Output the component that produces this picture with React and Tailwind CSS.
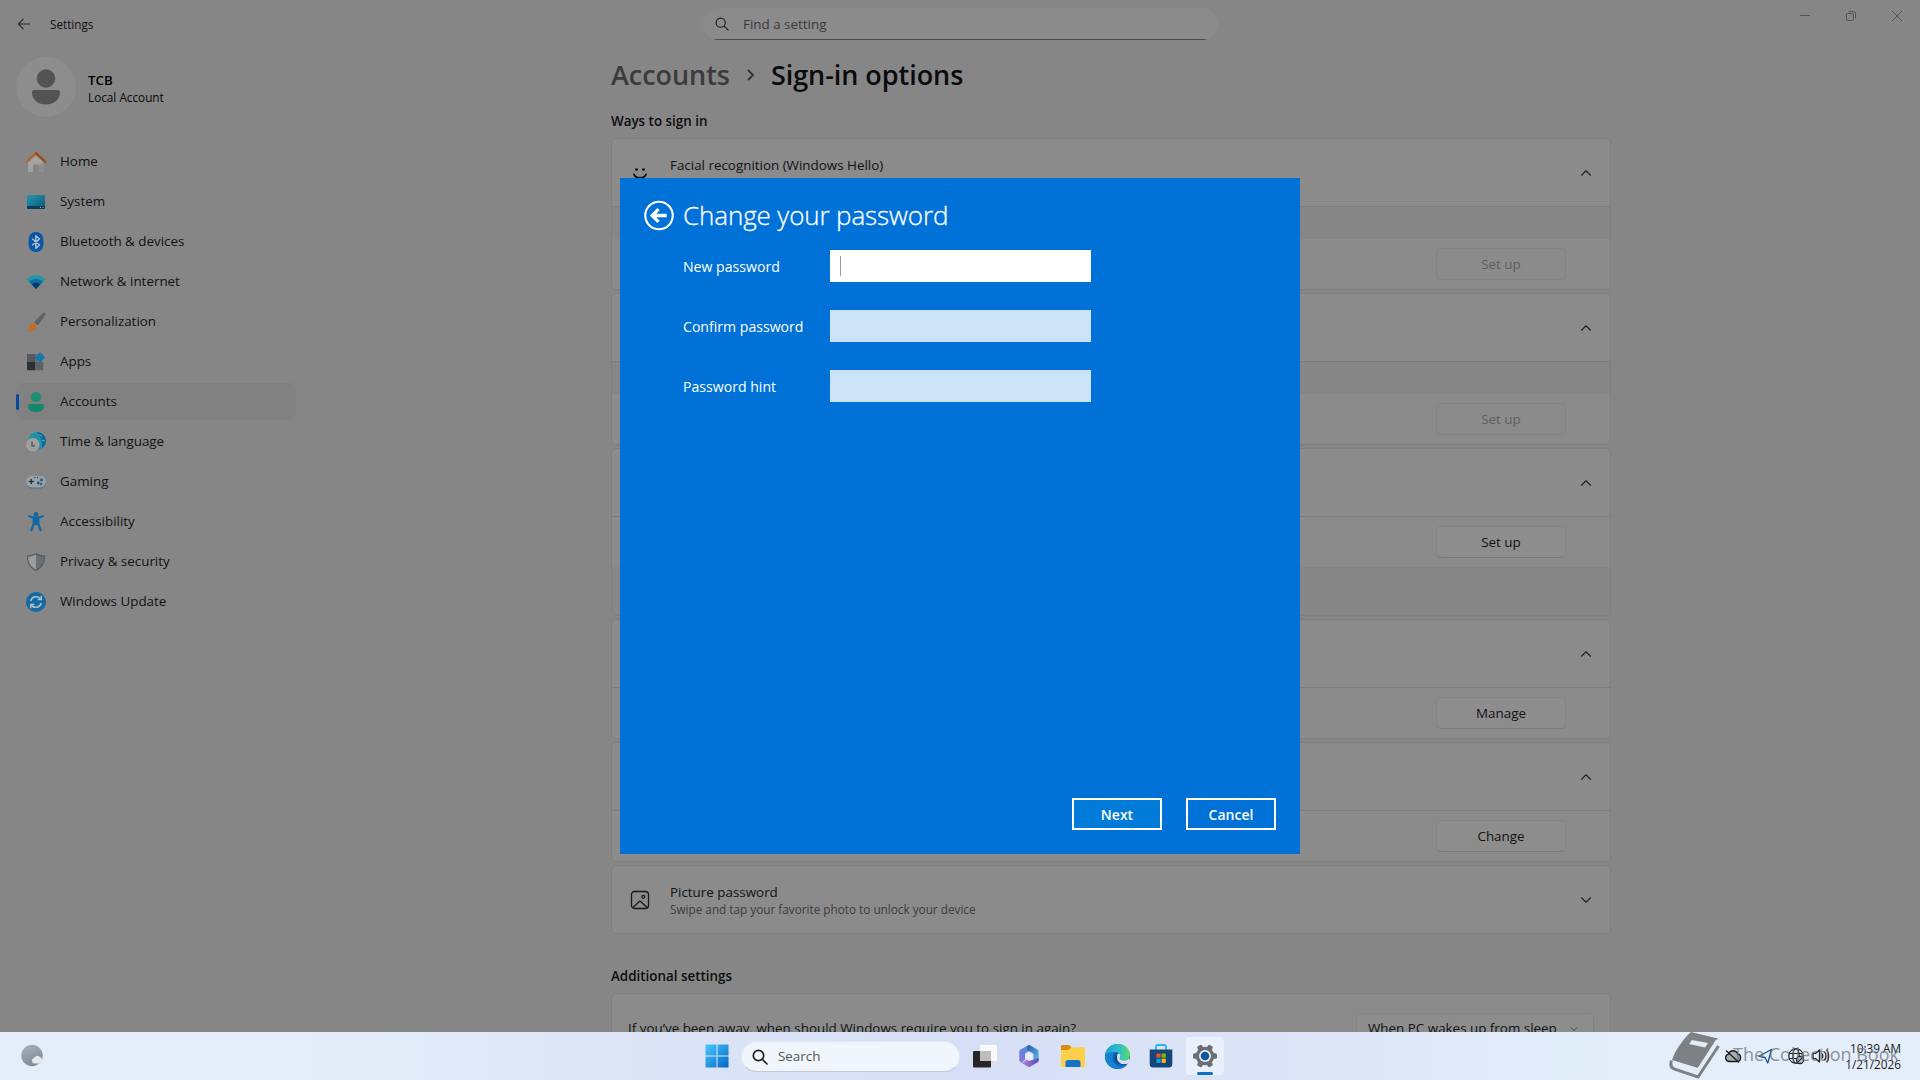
import React, { useState } from 'react';
import { ChevronUp, ChevronDown } from 'lucide-react';

/* ---------- sidebar icons (20x20) ---------- */

const HomeIcon = () => (
  <svg width="22" height="22" viewBox="0 0 22 22">
    <path d="M3 9.500 11 2.500l8 7V20a1 1 0 0 1-1 1h-4v-6.500a1 1 0 0 0-1-1H9a1 1 0 0 0-1 1V21H4a1 1 0 0 1-1-1z" fill="#a3a3a3" />
    <path d="M14 14v7h4a1 1 0 0 0 1-1v-9z" fill="#8f8f8f" />
    <path d="M2 10.600 11 2.400l9 8.200" fill="none" stroke="#b3652a" strokeWidth="2.500" strokeLinecap="round" strokeLinejoin="round" />
    <path d="m11 2.400 9 8.200" fill="none" stroke="#9c4d1c" strokeWidth="2.500" strokeLinecap="round" />
  </svg>
);

const SystemIcon = () => (
  <svg width="20" height="20" viewBox="0 0 20 20">
    <defs>
      <linearGradient id="sys" x1="0" y1="0" x2="1" y2="1">
        <stop offset="0" stopColor="#2299a6" />
        <stop offset="1" stopColor="#0d5680" />
      </linearGradient>
    </defs>
    <rect x="1" y="3" width="18" height="14" rx="1.200" fill="url(#sys)" />
    <path d="M1 14h18v1.800A1.200 1.200 0 0 1 17.800 17H2.200A1.200 1.200 0 0 1 1 15.800z" fill="#093b5a" />
    <path d="M14 15.500h1M16.500 15.500h1" stroke="#8fb0bd" strokeWidth="1" />
  </svg>
);

const BluetoothIcon = () => (
  <svg width="20" height="20" viewBox="0 0 20 20">
    <rect x="2.600" y="0" width="14.800" height="20" rx="7.200" fill="#0756a8" />
    <path d="m6.300 6.700 7.200 6.300-3.600 3.200V3.800l3.600 3.200-7.200 6.300" fill="none" stroke="#b9c4cf" strokeWidth="1.400" strokeLinejoin="round" />
  </svg>
);

const NetworkIcon = () => (
  <svg width="20" height="20" viewBox="0 0 20 20">
    <path d="M.5 7.500C3 4.600 6.300 3.300 10 3.300s7 1.300 9.500 4.200L10 17z" fill="#2299a5" />
    <path d="M3 9.800C5 7.800 7.300 6.900 10 6.900s5 .9 7 2.900L10 17z" fill="#126ba4" />
    <path d="M5.700 12.500c1.300-1.200 2.700-1.700 4.300-1.700s3 .5 4.300 1.700L10 17z" fill="#0b3a72" />
  </svg>
);

const BrushIcon = () => (
  <svg width="20" height="20" viewBox="0 0 20 20">
    <path d="M18.600.8c1 .6 1.200 1.600.5 2.700L11.500 14 7.500 10.700 16.600 1.300c.6-.7 1.300-.9 2-.5z" fill="#5f6468" />
    <path d="M7.800 10.300 11.800 13.700 10.700 15 6.800 11.500z" fill="#96999b" />
    <path d="M6.800 11.200c2 .3 3.700 1.800 4 3.700C9.500 18.500 5 20.200.7 19c2.300-1.300 2-2.800 2.900-5.200.6-1.600 1.700-2.600 3.200-2.600z" fill="#bf6d28" />
  </svg>
);

const AppsIcon = () => (
  <svg width="20" height="20" viewBox="0 0 20 20">
    <rect x="1" y="2" width="8" height="8" fill="#55585c" />
    <rect x="1" y="10" width="8" height="8.200" fill="#2c2f33" />
    <rect x="9" y="10" width="8.300" height="8.200" fill="#5e6165" />
    <rect x="9" y="2" width="3" height="8" fill="#6c6f72" />
    <rect x="10.200" y="1.700" width="7.600" height="7.600" rx="1.200" transform="rotate(45 14 5.500)" fill="#1677a9" />
  </svg>
);

const AccountsIcon = () => (
  <svg width="20" height="20" viewBox="0 0 20 20">
    <circle cx="10" cy="5.200" r="5.100" fill="#198f76" />
    <path d="M4 12h12a2 2 0 0 1 2 2c0 4-4 6.200-8 6.200S2 18 2 14a2 2 0 0 1 2-2z" fill="#148670" />
  </svg>
);

const TimeIcon = () => (
  <svg width="20" height="20" viewBox="0 0 20 20">
    <circle cx="11" cy="9" r="9" fill="#1f93a6" />
    <path d="M11 0a9 9 0 0 1 8 13l-3 3V9l-2-4z" fill="#14669c" />
    <path d="M13 2.500l3 2M16 8l3 1" stroke="#51aab4" strokeWidth="1" />
    <circle cx="6.800" cy="12.800" r="6.800" fill="#a0a0a0" />
    <path d="M6 9.500v4.300h3" fill="none" stroke="#42474b" strokeWidth="1.200" />
  </svg>
);

const GamingIcon = () => (
  <svg width="20" height="20" viewBox="0 0 20 20">
    <rect x="0" y="3.500" width="20" height="13" rx="6.300" fill="#5f686f" />
    <rect x="0" y="3.500" width="20" height="12" rx="6" fill="#98a2aa" />
    <path d="M5.300 7v5M2.800 9.500h5" stroke="#2b3035" strokeWidth="1.400" />
    <circle cx="12.300" cy="11" r="1.400" fill="#2a5070" />
    <circle cx="15.500" cy="8" r="1.400" fill="#2a5070" />
    <circle cx="15" cy="12" r="1.300" fill="#3c5f7b" />
    <path d="M8.500 5.500h1M11 5.500h1" stroke="#333" strokeWidth="1" />
  </svg>
);

const AccessibilityIcon = () => (
  <svg width="20" height="20" viewBox="0 0 20 20">
    <circle cx="10" cy="2.300" r="2.300" fill="#1066a6" />
    <path d="M3.200 4.200 8.500 6h3l5.300-1.800" fill="none" stroke="#1066a6" strokeWidth="2.200" strokeLinecap="round" strokeLinejoin="round" />
    <path d="M7.700 5.500h4.600v6l2.300 6.800M7.700 5.500v6l-2.300 6.800" fill="none" stroke="#1066a6" strokeWidth="2.200" strokeLinecap="round" />
    <path d="M7.500 5.500h5V12l-2.500 1.500L7.500 12z" fill="#1066a6" />
  </svg>
);

const ShieldIcon = () => (
  <svg width="20" height="20" viewBox="0 0 20 20">
    <path d="M10 1c2.600 1.600 5.500 2.300 9 2.500 0 7.500-2 12-9 15.500C3 15.500 1 11 1 3.500 4.500 3.300 7.400 2.600 10 1z" fill="#54585c" />
    <path d="M10 2.400c-2.200 1.200-4.900 1.900-7.900 2.200C2.300 10.800 4.300 14.800 10 17.700z" fill="#9b9ea0" />
    <path d="M10 2.400c2.200 1.200 4.900 1.900 7.900 2.200-.2 6.200-2.200 10.200-7.900 13.100z" fill="#6b7074" />
  </svg>
);

const UpdateIcon = () => (
  <svg width="20" height="20" viewBox="0 0 20 20">
    <circle cx="10" cy="10" r="10" fill="#1169a5" />
    <path d="M4.700 9a5.600 5.600 0 0 1 10-2M15.300 11a5.600 5.600 0 0 1-10 2" fill="none" stroke="#b3bec6" strokeWidth="1.500" />
    <path d="M15.300 3.800v3.700h-3.700M4.700 16.200v-3.700h3.700" fill="none" stroke="#b3bec6" strokeWidth="1.500" />
  </svg>
);

/* ---------- taskbar icons ---------- */

const StartIcon = () => (
  <svg width="24" height="24" viewBox="0 0 24 24">
    <defs>
      <linearGradient id="win" x1="0" y1="0" x2="1" y2="1">
        <stop offset="0" stopColor="#4cc8fb" />
        <stop offset="1" stopColor="#0067c8" />
      </linearGradient>
    </defs>
    <path d="M.5 .5h11v11H.5zM12.500 .5h11v11h-11zM.5 12.500h11v11H.5zM12.500 12.500h11v11h-11z" fill="url(#win)" />
  </svg>
);

const TaskViewIcon = () => (
  <svg width="24" height="24" viewBox="0 0 24 24">
    <rect x="7" y="1" width="17" height="16" rx="1" fill="#fafafa" />
    <rect x="0" y="7" width="18" height="16.500" rx="1" fill="#262626" />
    <path d="M7 7h11v10H7z" fill="#bcbcbc" />
  </svg>
);

const CopilotIcon = () => (
  <svg width="22" height="24" viewBox="0 0 22 24">
    <defs>
      <linearGradient id="cop1" x1="0" y1="0" x2="0" y2="1">
        <stop offset="0" stopColor="#4f8fdc" />
        <stop offset="1" stopColor="#8a70d8" />
      </linearGradient>
      <linearGradient id="cop2" x1="0" y1="0" x2="1" y2="1">
        <stop offset="0" stopColor="#2c57a8" />
        <stop offset="1" stopColor="#56c3ea" />
      </linearGradient>
      <linearGradient id="cop3" x1="0" y1="0" x2="1" y2="0">
        <stop offset="0" stopColor="#b78be6" />
        <stop offset="1" stopColor="#5a4bb0" />
      </linearGradient>
    </defs>
    <path d="M9.500 1.500 2.300 5.800A2 2 0 0 0 1.300 7.500V16a2 2 0 0 0 3 1.700L7 16V9.500l5.500-3.300z" fill="url(#cop1)" />
    <path d="M9.500 1.500a3 3 0 0 1 3 0l7.200 4.200a2 2 0 0 1 1 1.800V16l-5.200 1.500V9.700L9 6z" fill="url(#cop2)" />
    <path d="M20.700 14v2.500a2 2 0 0 1-1 1.700l-7.200 4.300a3 3 0 0 1-3 0L2.300 18c3 .5 5-1.300 6.500-2.300l2.200 1.300z" fill="url(#cop3)" />
    <path d="m11 8.300 3.500 2v3.800L11 16.100l-3.500-2v-3.800z" fill="#e8edfb" />
  </svg>
);

const FolderIcon = () => (
  <svg width="24" height="24" viewBox="0 0 24 24">
    <path d="M0 2.200C0 1.500.5 1 1.200 1h7l2.300 2.300L8 8H0z" fill="#d98f0c" />
    <path d="M0 6h7.500l3-2.800H23a1 1 0 0 1 1 1V22a1 1 0 0 1-1 1H1a1 1 0 0 1-1-1z" fill="#fcd04a" />
    <path d="M4.500 23v-4.500A2.500 2.500 0 0 1 7 16h10a2.500 2.500 0 0 1 2.500 2.500V23z" fill="#1373c4" />
  </svg>
);

const EdgeIcon = () => (
  <svg width="25" height="25" viewBox="0 0 24 24">
    <defs>
      <linearGradient id="edge1" x1="0" y1="0.300" x2="1" y2="0.300">
        <stop offset="0" stopColor="#1d9fe0" />
        <stop offset="0.600" stopColor="#2fc3c0" />
        <stop offset="1" stopColor="#62dc5b" />
      </linearGradient>
    </defs>
    <circle cx="12" cy="12" r="12" fill="#1063b5" />
    <path d="M.1 11C.6 4.800 5.700 0 12 0c6.600 0 12 4.600 12 10.200 0 3.600-2.700 5.600-5.700 5.600-2.400 0-4.300-.8-4.300-1.800 0-.6.8-1 .8-2.300 0-2-2-4-5.200-4C5.500 7.700 1.500 9.500.1 11z" fill="url(#edge1)" />
    <path d="M9.600 7.700C6 10 6 19.500 14.500 21.500c3 .6 6-1 7.800-3.300A12 12 0 0 1 12 24C5.300 24 .2 18.700 0 12c1-2.700 5-4.500 9.600-4.300z" fill="#1581d2" />
    <path d="M9.800 11c-2 5 2.500 9.500 8.500 8.500 2-.3 3.300-1 4-1.500.5-.5 0-1-.6-.7-4 2-9.400.500-10-4-.1-1.200.3-2.200.8-2.700-1-.8-2.300-.5-2.700.4z" fill="#0c4a8d" />
    <path d="M12.400 9.200c1.500-.3 2.500 1 2.400 2.500-.1 1.300-.8 1.700-.8 2.300 0 1 1.900 1.800 4.300 1.800 1.800 0 3.500-.7 4.600-2l1.100 1.300c-.3 1.300-.8 2.400-1.500 3.300-4 2-10 .8-10.900-4.600-.2-2 .1-3.600.8-4.600z" fill="#d7e2f7" />
  </svg>
);

const StoreIcon = () => (
  <svg width="24" height="24" viewBox="0 0 24 24">
    <path d="M7 6V2.500A1.500 1.500 0 0 1 8.500 1h7A1.500 1.500 0 0 1 17 2.500V6" fill="none" stroke="#2cb4ee" strokeWidth="1.800" />
    <path d="M.7 5.500h22.600V20a3.500 3.500 0 0 1-3.500 3.500H4.200A3.500 3.500 0 0 1 .7 20z" fill="#16457c" />
    <rect x="7.400" y="9.500" width="4.200" height="4.200" fill="#f25022" />
    <rect x="12.600" y="9.500" width="4.200" height="4.200" fill="#7fba00" />
    <rect x="7.400" y="14.700" width="4.200" height="4.200" fill="#00a4ef" />
    <rect x="12.600" y="14.700" width="4.200" height="4.200" fill="#ffb900" />
  </svg>
);

const GearIcon = () => (
  <svg width="26" height="26" viewBox="0 0 26 26">
    <g fill="#6a6f75">
      <circle cx="13" cy="13" r="9.300" />
      <rect x="10.300" y="1" width="5.400" height="24" rx="1.500" transform="rotate(30 13 13)" />
      <rect x="10.300" y="1" width="5.400" height="24" rx="1.500" transform="rotate(90 13 13)" />
      <rect x="10.300" y="1" width="5.400" height="24" rx="1.500" transform="rotate(150 13 13)" />
    </g>
    <circle cx="13" cy="13" r="6" fill="#e9effa" />
    <circle cx="13" cy="13" r="4.300" fill="#0f56a0" />
  </svg>
);

const WeatherIcon = () => (
  <svg width="24" height="24" viewBox="0 0 24 24">
    <defs>
      <linearGradient id="moon" x1="0.200" y1="0" x2="0.600" y2="1">
        <stop offset="0" stopColor="#a6b0ba" />
        <stop offset="1" stopColor="#7f8993" />
      </linearGradient>
    </defs>
    <circle cx="11" cy="11.500" r="10.700" fill="url(#moon)" />
    <path d="M13 19.500a3 3 0 0 1 .3-5.800 4 4 0 0 1 7.200 1 2.500 2.500 0 0 1 .3 4.800z" fill="#e4e8ea" />
  </svg>
);

const SearchIcon = ({ size, color, width }) => (
  <svg width={size} height={size} viewBox="0 0 16 16" fill="none" stroke={color} strokeWidth={width} strokeLinecap="round">
    <circle cx="6.500" cy="6.500" r="5.200" />
    <path d="m10.500 10.500 4.500 4.500" />
  </svg>
);

const navItems = [
  { label: 'Home', icon: HomeIcon },
  { label: 'System', icon: SystemIcon },
  { label: 'Bluetooth & devices', icon: BluetoothIcon },
  { label: 'Network & internet', icon: NetworkIcon },
  { label: 'Personalization', icon: BrushIcon },
  { label: 'Apps', icon: AppsIcon },
  { label: 'Accounts', icon: AccountsIcon },
  { label: 'Time & language', icon: TimeIcon },
  { label: 'Gaming', icon: GamingIcon },
  { label: 'Accessibility', icon: AccessibilityIcon },
  { label: 'Privacy & security', icon: ShieldIcon },
  { label: 'Windows Update', icon: UpdateIcon },
];

const taskbarApps = [TaskViewIcon, CopilotIcon, FolderIcon, EdgeIcon, StoreIcon];

function TitleBar() {
  return (
    <header className="flex h-[49px] items-start">
      <div className="flex w-[703px] items-center pl-[17px] pt-[15px]">
        <svg width="14" height="18" viewBox="0 0 14 18" fill="none" stroke="#2b2b2b" strokeWidth="1.100">
          <path d="M13 9H1.500M6.500 3.800 1.300 9l5.200 5.200" />
        </svg>
        <span className="ml-[19px] text-[11.700px] leading-4 text-[#111]">Settings</span>
      </div>
      <div className="mt-2 h-8 w-[515px] overflow-hidden rounded-full bg-[#8b8b8b]">
        <div className="flex h-8 items-center border-b border-[#4a4a4a] pl-3">
          <SearchIcon size={14} color="#1d1d1d" width={1.3} />
          <span className="ml-[14px] pt-px text-[13.400px] text-[#3a3a3a]">Find a setting</span>
        </div>
      </div>
      <div className="ml-auto flex gap-9 pr-[18px] pt-[11px] text-[#555]">
        <svg width="10" height="10" viewBox="0 0 10 10" stroke="currentColor"><path d="M0 4.500h10" /></svg>
        <svg width="10" height="10" viewBox="0 0 10 10" fill="none" stroke="currentColor">
          <rect x=".5" y="2.500" width="7" height="7" rx="1.200" />
          <path d="M2.500 .6h4.800a2.200 2.200 0 0 1 2.200 2.200v4.700" />
        </svg>
        <svg width="10" height="10" viewBox="0 0 10 10" stroke="currentColor"><path d="m0 0 10 10M10 0 0 10" /></svg>
      </div>
    </header>
  );
}

function Sidebar() {
  const [active, setActive] = useState('Accounts');

  return (
    <aside className="w-[611px] shrink-0 pl-4">
      <div className="flex h-[76px] items-center">
        <div className="flex h-[60px] w-[60px] items-center justify-center rounded-full bg-[#8d8d8d]">
          <svg width="30" height="36" viewBox="0 0 30 36" fill="#535353">
            <circle cx="15" cy="9.500" r="9.200" />
            <path d="M3.500 21h23A2.500 2.500 0 0 1 29 23.500C29 31 22.500 35.500 15 35.500S1 31 1 23.500A2.500 2.500 0 0 1 3.500 21z" />
          </svg>
        </div>
        <div className="ml-3 pt-px">
          <div className="text-[13.300px] font-semibold leading-[18px] text-black">TCB</div>
          <div className="text-[11.750px] leading-4 text-[#080808]">Local Account</div>
        </div>
      </div>

      <nav className="mt-[18px] flex w-[280px] flex-col gap-[3px]">
        {navItems.map(({ label, icon: Icon }) => (
          <button
            key={label}
            onClick={() => setActive(label)}
            className={`flex h-[37px] items-center rounded-md text-left ${active === label ? 'bg-[#818181]' : ''}`}
          >
            <span className={`h-4 w-[3px] rounded-full ${active === label ? 'bg-[#08499b]' : ''}`} />
            <span className="ml-[6px] flex w-[22px] justify-center"><Icon /></span>
            <span className="ml-[13px] text-[13.400px] text-[#121212]">{label}</span>
          </button>
        ))}
      </nav>
    </aside>
  );
}

function Card({ children }) {
  return <section className="overflow-hidden rounded-[5px] border border-[#7f7f7f] bg-[#8b8b8b]">{children}</section>;
}

function CardHeader({ icon, title, subtitle, open }) {
  const Chevron = open ? ChevronUp : ChevronDown;
  return (
    <div className="flex h-[67px] items-center pl-[18px] pr-[15px]">
      <div className="flex w-[20px] justify-center">{icon}</div>
      <div className="ml-5 flex-1">
        <div className="text-[13.400px] leading-[18px] text-[#121212]">{title}</div>
        <div className="h-4 text-[11.750px] leading-4 text-[#3d3d3d]">{subtitle}</div>
      </div>
      <Chevron size={18} strokeWidth={1.5} color="#222" />
    </div>
  );
}

function ActionRow({ label, disabled }) {
  return (
    <div className="flex h-[50px] items-center justify-end pr-11">
      <button
        disabled={disabled}
        className={`h-8 w-[130px] rounded-[5px] border text-[13.400px] ${disabled ? 'border-[#838383] text-[#5e5e5e]' : 'border-[#848484] border-b-[#7b7b7b] bg-[#8d8d8d] text-[#121212]'}`}
      >
        {label}
      </button>
    </div>
  );
}

function SignInOptions() {
  return (
    <main className="w-[1000px]">
      <h1 className="flex h-[52px] items-center text-[27px] font-semibold tracking-[-0.050px]">
        <span className="text-[#3b3b3b]">Accounts</span>
        <svg className="mx-4" width="9" height="12" viewBox="0 0 9 12" fill="none" stroke="#333" strokeWidth="1.800">
          <path d="m2 1 5 5-5 5" />
        </svg>
        <span className="text-[#0b0b0b]">Sign-in options</span>
      </h1>
      <h2 className="mt-[11px] h-[26px] text-[13.400px] font-semibold leading-[18px] text-[#0d0d0d]">Ways to sign in</h2>

      <div className="flex flex-col gap-[3px]">
        <Card>
          <CardHeader
            open
            icon={
              <svg width="20" height="20" viewBox="0 0 20 20">
                <circle cx="6.500" cy="6.600" r="1.400" fill="#0c0c0c" />
                <circle cx="13.500" cy="6.600" r="1.400" fill="#0c0c0c" />
                <path d="M4 11.500c1.800 4.500 10.200 4.500 12 0" fill="none" stroke="#0c0c0c" strokeWidth="1.900" strokeLinecap="round" />
              </svg>
            }
            title="Facial recognition (Windows Hello)"
          />
          <div className="h-[33px] border-t border-[#7d7d7d] bg-[#868686]" />
          <ActionRow label="Set up" disabled />
        </Card>
        <Card>
          <CardHeader open />
          <div className="h-[33px] border-t border-[#7d7d7d] bg-[#868686]" />
          <ActionRow label="Set up" disabled />
        </Card>
        <Card>
          <CardHeader open />
          <div className="border-t border-[#7d7d7d]"><ActionRow label="Set up" /></div>
          <div className="h-12 bg-[#868686]" />
        </Card>
        <Card>
          <CardHeader open />
          <div className="border-t border-[#7d7d7d]"><ActionRow label="Manage" /></div>
        </Card>
        <Card>
          <CardHeader open />
          <div className="border-t border-[#7d7d7d]"><ActionRow label="Change" /></div>
        </Card>
        <Card>
          <CardHeader
            icon={
              <svg width="20" height="20" viewBox="0 0 20 20" fill="none" stroke="#181818" strokeWidth="1.300">
                <rect x="1.500" y="1.500" width="17" height="17" rx="3" />
                <circle cx="13.300" cy="6.800" r="1.500" />
                <path d="m3 17.500 6-5.800a1.500 1.500 0 0 1 2 0l6 5.800" />
              </svg>
            }
            title="Picture password"
            subtitle="Swipe and tap your favorite photo to unlock your device"
          />
        </Card>
      </div>

      <h2 className="mt-[33px] h-[26px] text-[13.400px] font-semibold leading-[18px] text-[#0d0d0d]">Additional settings</h2>
      <Card>
        <div className="flex h-[69px] items-center justify-between pl-4 pr-4 text-[13.400px] text-[#121212]">
          <span>If you’ve been away, when should Windows require you to sign in again?</span>
          <div className="flex h-8 w-[238px] items-center justify-between rounded-[5px] border border-[#838383] bg-[#8d8d8d] pl-[11px] pr-[13px]">
            When PC wakes up from sleep
            <ChevronDown size={12} strokeWidth={1.500} color="#333" />
          </div>
        </div>
      </Card>
    </main>
  );
}

function Field({ label, focused }) {
  return (
    <label className="flex h-8 items-center">
      <span className="w-[147px] pt-0.5 text-[14.100px] text-white">{label}</span>
      <span className={`flex h-8 w-[261px] items-center pl-[10px] ${focused ? 'bg-white' : 'bg-[#cce2f7]'}`}>
        {focused && <span className="h-5 w-px bg-[#9a9a9a]" />}
      </span>
    </label>
  );
}

function PasswordDialog() {
  return (
    <div className="absolute left-[620px] top-[178px] flex h-[676px] w-[680px] flex-col bg-[#0071d7]">
      <div className="mt-[19px] flex h-9 items-center pl-6">
        <svg width="30" height="31" viewBox="0 0 31 31" fill="none" stroke="#fff">
          <circle cx="15.500" cy="15.500" r="14.200" strokeWidth="2.200" />
          <path d="M23.500 15.500H9M15 9l-6.500 6.500L15 22" strokeWidth="3.400" />
        </svg>
        <h3 className="ml-[9px] text-[26px] font-light tracking-[-0.120px] text-white [-webkit-text-stroke:0.3px_white]">Change your password</h3>
      </div>
      <div className="mt-[17px] flex flex-col gap-7 pl-[63px]">
        <Field label="New password" focused />
        <Field label="Confirm password" />
        <Field label="Password hint" />
      </div>
      <div className="mb-6 mr-6 mt-auto flex justify-end gap-6 text-[14px] font-semibold text-white">
        <button className="h-8 w-[90px] border-2 border-white bg-[#007bd9] pt-px leading-none">Next</button>
        <button className="h-8 w-[90px] border-2 border-white pt-px leading-none">Cancel</button>
      </div>
    </div>
  );
}

function Tray() {
  return (
    <div className="ml-auto flex items-center pr-[19px] text-[#1a1a1a]">
      <svg width="12" height="8" viewBox="0 0 12 8" fill="none" stroke="currentColor" strokeWidth="1.300"><path d="m1 6.500 5-5 5 5" /></svg>
      <svg className="ml-[18px]" width="18" height="16" viewBox="0 0 18 16" fill="none" stroke="currentColor" strokeWidth="1.300">
        <path d="M5 13.500a3.700 3.700 0 0 1-.4-7.300 4.700 4.700 0 0 1 9-.2 3.800 3.800 0 0 1-.4 7.500z" fill="#a9abad" />
        <path d="m2 2.500 13 12" />
      </svg>
      <svg className="ml-[16px]" width="15" height="16" viewBox="0 0 15 16" fill="none" stroke="#1c4f97" strokeWidth="1.300" strokeLinejoin="round">
        <path d="M13.500 1.500 1 8.300l6 1.200 2.800 5.500z" />
      </svg>
      <svg className="ml-[15px]" width="17" height="17" viewBox="0 0 17 17" fill="none" stroke="currentColor" strokeWidth="1.100">
        <circle cx="8" cy="8" r="7.300" />
        <ellipse cx="8" cy="8" rx="3.200" ry="7.300" />
        <path d="M1.200 5.500h13.600M1.200 10.500h8" />
        <circle cx="12" cy="12" r="3.600" fill="#b9c0c7" />
        <path d="m9.600 14.400 4.800-4.800" />
      </svg>
      <svg className="ml-[7px]" width="18" height="16" viewBox="0 0 18 16" fill="none" stroke="currentColor" strokeWidth="1.200" strokeLinejoin="round">
        <path d="M1 5.500h2.500L7.500 2v12l-4-3.500H1z" />
        <path d="M10 5.500c1 1.500 1 3.500 0 5M12.300 3.500c2 2.700 2 6.300 0 9M14.600 1.700c2.900 3.700 2.900 8.900 0 12.600" />
      </svg>
      <div className="w-[71px] text-right text-[11.750px] leading-4">
        <div>10:39 AM</div>
        <div>1/21/2026</div>
      </div>
    </div>
  );
}

function Watermark() {
  return (
    <div className="absolute left-[1669px] top-0 flex h-12 items-center">
      <svg width="51" height="48" viewBox="0 0 51 48">
        <path d="M22 0 49 6.500 29 36 3 28C6 18 16 5 22 0z" fill="#7d8084" />
        <path d="M2.500 28.500C1 33 2 35.500 5 36.800L29 45 49.500 14" fill="none" stroke="#7d8084" strokeWidth="3" />
        <path d="M4.500 30.500 29 37.500 48 8" fill="none" stroke="#e3edf8" strokeWidth="2.200" />
        <path d="m23 8 16 3-3 4.500-16-3.500z" fill="#e3edf8" />
      </svg>
      <span className="ml-[13px] -mt-1 whitespace-nowrap text-[18px] text-[#6b7077]/75">The Collection Book</span>
    </div>
  );
}

function Taskbar() {
  return (
    <footer className="absolute bottom-0 left-0 flex h-12 w-full items-center bg-linear-to-r from-[#e3eef9] from-15% via-[#d6def5] via-50% to-[#e3eefa] to-85%">
      <Watermark />
      <div className="relative flex w-[695px] pl-[21px]"><WeatherIcon /></div>
      <div className="flex h-12 w-11 items-center justify-center"><StartIcon /></div>
      <div className="ml-[2px] mr-[3px] mt-px flex h-[31px] w-[219px] items-center rounded-full border border-[#dfe6f4] border-b-[#c3cadb] bg-[#f1f6fd] pl-[10px]">
        <SearchIcon size={16} color="#222" width={1.7} />
        <span className="ml-[10px] text-[13.400px] text-[#555]">Search</span>
      </div>
      {taskbarApps.map((Icon, i) => (
        <div key={i} className="flex h-12 w-11 items-center justify-center"><Icon /></div>
      ))}
      <div className="ml-[3px] flex h-[38px] w-[38px] flex-col items-center justify-between rounded bg-[#eaf0fb] pt-[6px]">
        <GearIcon />
        <span className="h-[3px] w-4 rounded-full bg-[#0b6fc6]" />
      </div>
      <Tray />
    </footer>
  );
}

export default function App() {
  return (
    <div className="relative h-[1080px] w-[1920px] overflow-hidden bg-[#868686] font-['Open_Sans','Noto_Sans',sans-serif]">
      <TitleBar />
      <div className="flex">
        <Sidebar />
        <SignInOptions />
      </div>
      <PasswordDialog />
      <Taskbar />
    </div>
  );
}
